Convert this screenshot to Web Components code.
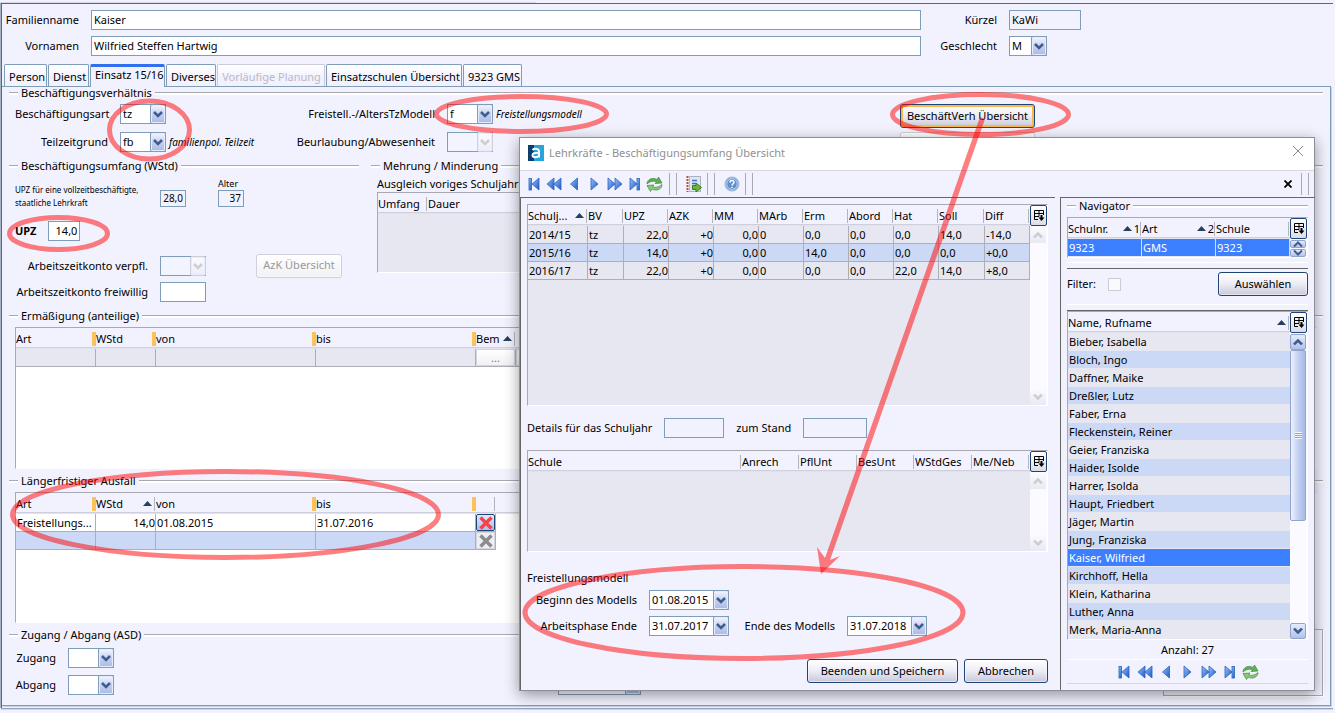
<!DOCTYPE html>
<html lang="de">
<head>
<meta charset="utf-8">
<title>Lehrkräfte</title>
<style>
html{background:#f2f2ff}
body{margin:0;font:11px/14px "Noto Sans","Open Sans",sans-serif;color:#000}
</style>
</head>
<body>
<teacher-app></teacher-app>
<script>
const BASE = `
*{box-sizing:border-box}
:host{display:block}
:host([hidden]){display:none}
input,select,button{font:inherit;color:inherit;margin:0;outline:0}
label{white-space:nowrap}
`;
let uid = 0;
function define(name, render, after) {
  customElements.define(name, class extends HTMLElement {
    connectedCallback() {
      if (this.shadowRoot) return;
      this.attachShadow({ mode: 'open' }).innerHTML = render(this);
      if (after) after(this);
    }
  });
}
const attr = (el, n, d = '') => el.hasAttribute(n) ? el.getAttribute(n) : d;

/* label + text box */
define('text-field', el => {
  const id = 'f' + (++uid), label = attr(el, 'label');
  return `<style>${BASE}
  :host{display:flex;align-items:center;gap:12px}
  label{flex:none;width:var(--label,auto);text-align:right}
  input{flex:1;min-width:0;width:var(--field,100%);height:var(--h,20px);border:1px solid #7f9db9;background:#fff;padding:0 2px 2px;text-align:var(--align,left)}
  :host([fixed]) input{flex:none}
  input[readonly]{background:#f2f2ff}
  </style>${label ? `<label for="${id}">${label}</label>` : ''}<input id="${id}" type="text" value="${attr(el, 'value')}" ${label ? '' : `aria-label="${attr(el, 'name')}"`} ${el.hasAttribute('readonly') ? 'readonly' : ''}>`;
});

/* label + drop-down */
define('combo-box', el => {
  const id = 'c' + (++uid), label = attr(el, 'label'), v = attr(el, 'value');
  return `<style>${BASE}
  :host{display:flex;align-items:center;gap:12px}
  label{flex:none;width:var(--label,auto);text-align:right}
  .box{display:grid;grid-template-columns:1fr 16px;width:var(--field,46px);height:20px;flex:none}
  select{grid-area:1/1/2/3;appearance:none;background:linear-gradient(#fff,#fff) no-repeat 0 0/calc(100% - 15px) 100%;border:0;border-radius:0;box-shadow:inset 1px 1px #7f9db9,inset 0 -1px #7f9db9;height:20px;padding:0 18px 1px 3px;width:100%;min-width:0}
  .arrow{grid-area:1/2;pointer-events:none;height:20px;border:1px solid #7f9db9;border-radius:2px;background:linear-gradient(#f4f6ff,#c6d1f2 50%,#a9bae2);box-shadow:inset 0 0 0 1px #e6ecff;display:grid;place-items:center}
  path{fill:none;stroke:#3f5c8c;stroke-width:2.5}
  :host([disabled]) select{background:#f2f5ff;opacity:1}
  :host([disabled]) .arrow{border-color:#d0d0dc;background:linear-gradient(#fbfbff,#ededf4)}
  :host([disabled]) path{stroke:#cdcdd8}
  .hint{font-size:10px;font-style:italic;margin-left:-9px}
  </style>${label ? `<label for="${id}">${label}</label>` : ''}<span class="box"><select id="${id}" ${label ? '' : `aria-label="${attr(el, 'name')}"`} ${el.hasAttribute('disabled') ? 'disabled' : ''}><option>${v}</option></select><span class="arrow"><svg width="10" height="8" viewBox="0 0 10 8"><path d="M1 2 5 6 9 2"/></svg></span></span>${attr(el, 'hint') ? `<span class="hint">${attr(el, 'hint')}</span>` : ''}`;
});

define('push-button', el => `<style>${BASE}
  button{display:block;width:var(--w,auto);height:24px;padding:0 0 1px;border:1px solid #1f4478;border-radius:3px;background:linear-gradient(#fff,#ececf6 50%,#c8c8da);box-shadow:inset 0 0 0 1px #ffffff80;white-space:nowrap}
  :host([primary]) button{box-shadow:inset 0 0 0 2px #f9b84a}
  :host([disabled]) button{color:#999;border-color:#cfcfda;background:linear-gradient(#fff,#f1f1f6)}
  </style><button type="button" ${el.hasAttribute('disabled') ? 'disabled' : ''} ${attr(el, 'name') ? `aria-label="${attr(el, 'name')}"` : ''}><slot></slot></button>`);

define('group-box', el => `<style>${BASE}
  .cap{display:flex;align-items:center;gap:3px;height:12px;white-space:nowrap}
  .cap::before,.cap::after{content:"";height:2px;border-top:1px solid #a9a9b3;background:#fff}
  .cap::before{width:9px}.cap::after{flex:1}
  .in{padding:var(--pad,5px 0 0 6px)}
  </style><div class="cap">${attr(el, 'caption')}</div><div class="in"><slot></slot></div>`);

/* vertical scroll bar with end arrows */
define('scroll-bar', () => `<style>${BASE}
  :host{display:flex;flex-direction:column;justify-content:space-between;width:17px;background:#fbfbff;padding:1px 1px 0 0}
  .b{height:16px;display:grid;place-items:center;background:linear-gradient(#fafaff,#e9e9f1)}
  path{fill:none;stroke:#cdcdd8;stroke-width:2.5}
  .t{display:none;flex:1;margin-bottom:102px;border:1px solid #90a5cc;border-radius:2px;background:linear-gradient(90deg,#eef2ff,#bccbf0 60%,#a9bae4);place-items:center}
  .t::before{content:"";width:7px;height:7px;background:repeating-linear-gradient(#f5f8ff 0 1px,#90a5cc 1px 2px)}
  :host([active]) .b,:host([mini]) .b{background:linear-gradient(#e6ecff,#b2c1e8);border:1px solid #90a5cc;border-radius:2px}
  :host([active]) path,:host([mini]) path{stroke:#3f5c8c}
  :host([active]) .t{display:grid}
  :host([mini]) .b{height:8px}
  :host([mini]) path{stroke-width:2}
  </style><div class="b"><svg width="10" height="6" viewBox="0 0 10 6"><path d="M1 5.500 5 1.500 9 5.500"/></svg></div><div class="t"></div><div class="b"><svg width="10" height="6" viewBox="0 0 10 6"><path d="M1 .5 5 4.500 9 .5"/></svg></div>`);

/* data table: cols = [title, width, flags, sort rank]; flags o = orange mark, r = right aligned, s = sorted */
const cell = (v) => {
  if (v === '@more') return `<button type="button" class="more" disabled>...</button>`;
  if (v === '@del' || v === '@del0') return `<button type="button" class="del ${v === '@del' ? 'on' : ''}" aria-label="Zeile löschen"><svg width="16" height="14" viewBox="0 0 16 14"><path d="M2.500 1.500 13.500 12.500M13.500 1.500 2.500 12.500"/></svg></button>`;
  return v;
};
define('data-grid', el => {
  const cols = JSON.parse(attr(el, 'cols')), rows = JSON.parse(attr(el, 'rows', '[]'));
  const sel = +attr(el, 'selected', '-1');
  const up = '<svg width="9" height="5" viewBox="0 0 9 5"><path d="M0 5 4.500 0 9 5z" fill="#26415f"/></svg>';
  return `<style>${BASE}
  :host{display:flex;border:1px solid;border-color:#a9a9b3 #fff #fff #a9a9b3;min-height:var(--min,0)}
  .view{flex:1;min-width:0;background:linear-gradient(#f2f2ff 0 19px,#cfcfdd 19px 20px,#e2e2ec 20px 21px,var(--body,#fff) 21px);overflow:hidden}
  table{table-layout:fixed;border-spacing:0;width:${cols.reduce((a, c) => a + c[1], 0)}px}
  th{height:21px;padding:0 2px 0 0;font-weight:400;text-align:left;background:linear-gradient(#b4b4be,#b4b4be) no-repeat right 1px top 4px/1px 14px}
  th.o{background:linear-gradient(90deg,#fcc35c 3px,#c4c4ce 3px) no-repeat right 0 top 4px/4px 14px}
  .h{display:flex;align-items:center;height:19px;padding:0;overflow:hidden;white-space:nowrap}
  .h svg{margin:0 2px 0 auto}
  td{height:18px;padding:1px 0 0 1px;border:solid #aeaeb8;border-width:0 1px 1px 0;background:var(--row,#e7e7f1);white-space:nowrap;overflow:hidden;line-height:16px}
  td.r{text-align:right}
  tr.alt td{background:#ccd9f6}
  tr.sel td{background:#3d80ff;color:#fff}
  :host([soft]) td{border-right-color:#d5dcf0;border-bottom-color:#e7e7f1}
  :host([list]) td{border-right:0;border-bottom-color:#e7e7f1}
  .side{display:flex;flex-direction:column;width:17px;background:#fff}
  .side scroll-bar{flex:1}
  .corner{width:17px;height:21px;padding:0;border:1px solid #1f4478;border-radius:2px;background:linear-gradient(#fff,#dcdce8);display:grid;place-items:center}
  td:has(button){padding:0}
  .more{display:block;width:100%;height:17px;padding:0;line-height:12px;border:1px solid #d5d5df;border-radius:2px;background:linear-gradient(#fff,#f1f1f6);color:#777}
  .del{display:grid;place-items:center;width:100%;height:17px;padding:0;border:1px solid #d5d5df;border-radius:2px;background:#eeeef3}
  .del path{stroke:#8b8b90;stroke-width:3.500;fill:none}
  .del.on{border-color:#1f4478;background:linear-gradient(#e2eaff,#aabfe9)}
  .del.on path{stroke:#f4434a}
  </style>
  <div class="view"><table><colgroup>${cols.map(c => `<col style="width:${c[1]}px">`).join('')}</colgroup>
  <thead><tr>${cols.map(c => `<th class="${/o/.test(c[2] || '') ? 'o' : ''}"><span class="h">${c[0]}${/s/.test(c[2] || '') ? up : ''}${c[3] || ''}</span></th>`).join('')}</tr></thead>
  <tbody>${rows.map((r, i) => `<tr class="${i === sel ? 'sel' : i % 2 ? 'alt' : ''}">${r.map((v, j) => `<td class="${/r/.test(cols[j][2] || '') ? 'r' : ''}">${cell(v)}</td>`).join('')}</tr>`).join('')}</tbody></table></div>
  ${el.hasAttribute('scroll') ? `<div class="side"><button class="corner" type="button" aria-label="Spalten wählen"><svg width="12" height="13" viewBox="0 0 12 13"><path d="M5 10.500H1.500V1.500H10.500V6M1.500 4.500H10.500M6 1.500V7.500M1.500 7.500H6" fill="none" stroke="#000"/><path d="M8.500 6V9" stroke="#000" stroke-width="2"/><path d="M5.500 8.500H11.500L8.500 12z"/></svg></button><scroll-bar ${attr(el, 'scroll')}></scroll-bar></div>` : ''}`;
});

/* record navigation: first, page back, back, next, page next, last, reload */
define('record-nav', () => {
  const tri = (x, d) => `<path d="M${x} 2 ${x + 7 * d} 8 ${x} 14z" fill="url(#g)" stroke="#2a63c0" stroke-width=".8"/>`;
  const bar = x => `<rect x="${x}" y="2.500" width="2.500" height="11.500" fill="url(#g)" stroke="#2a63c0" stroke-width=".8"/>`;
  const defs = '<defs><linearGradient id="g" x2="1" y2="1"><stop stop-color="#9cc4f8"/><stop offset="1" stop-color="#1857c6"/></linearGradient></defs>';
  const reload = '<path d="M1 8C1 3 7 1 11 3.500L12.500 1 16 7 9 7.500 10.500 6C8 4.500 4.500 5 1 8z" fill="#62b055" stroke="#3b8a3c" stroke-width=".7"/><path d="M16 8.500C16 13.500 10 15.500 6 13L4.500 15.500 1 9.500 8 9 6.500 10.500C9 12 12.500 11.500 16 8.500z" fill="#8ac97a" stroke="#3b8a3c" stroke-width=".7"/>';
  const items = [['Erster', bar(3) + tri(13, -1)], ['Seite zurück', tri(8, -1) + tri(15, -1)], ['Zurück', tri(11.5, -1)], ['Weiter', tri(5, 1)], ['Seite vor', tri(2, 1) + tri(9, 1)], ['Letzter', tri(4, 1) + bar(11)], ['Aktualisieren', reload]];
  return `<style>${BASE}
  :host{display:flex}
  button{width:var(--step,20px);height:20px;padding:0;border:0;background:none;display:grid;place-items:center}
  </style>${items.map(i => `<button type="button" aria-label="${i[0]}"><svg width="17" height="16" viewBox="0 0 17 16">${defs}${i[1]}</svg></button>`).join('')}`;
});

define('tab-bar', () => `<style>${BASE}
  :host{display:flex;align-items:flex-end;gap:1px;padding-left:2px;height:22px}
  button{height:22px;padding:3px 3px 0 4px;border:1px solid #7f9db9;border-bottom:0;border-radius:2px 2px 0 0;background:linear-gradient(#fff,#f2f2ff 60%);white-space:nowrap;width:var(--w);line-height:14px}
  button.on{height:23px;border-top:3px solid #2f6ff0;padding-top:0;padding-bottom:4px;background:#f2f2ff;margin-bottom:-1px}
  button:disabled{color:#b9b9c4;border-color:#c9ccd8}
  </style>${[['Person', 43], ['Dienst', 41], ['Einsatz 15/16', 75, 'on'], ['Diverses', 50], ['Vorläufige Planung', 108, 'off'], ['Einsatzschulen Übersicht', 136], ['9323 GMS', 59]].map(t => `<button type="button" class="${t[2] || ''}" style="--w:${t[1]}px" ${t[2] === 'off' ? 'disabled' : ''}>${t[0]}</button>`).join('')}`);

define('overview-dialog', () => `<style>${BASE}
  :host{width:796px;border:1px solid #8e8e96;background:#f2f2ff;box-shadow:0 4px 14px #0006;padding-right:1px}
  header{display:flex;align-items:center;gap:5px;height:33px;margin-right:-1px;padding:0 8px 3px;background:#fff;border-bottom:1px solid #d5d5e6;font-size:11px;color:#8f8f8f}
  header button{margin-left:auto;width:16px;height:16px;padding:0;border:0;background:none}
  .bar{display:flex;align-items:center;height:26px;padding-left:4px}
  .bar record-nav{margin-right:3px}
  .sep{width:8px;height:22px;border:solid #a9a9b3;border-width:0 1px;margin-left:2px}
  .bar .ic{width:22px;height:24px;margin-left:6px;padding:0;border:0;background:none;display:grid;place-items:center}
  .bar .x{margin-left:auto}.bar .last{margin-right:4px}
  .cols{display:grid;grid-template-columns:535px 1fr;gap:5px}
  .left,.right{border:solid #666;border-width:1px 0 0 1px;padding:6px 7px 0 6px}
  .right{padding:2px 7px 6px 6px}
  .row{display:flex;gap:12px;margin:12px 0}
  .form{display:grid;grid-template-columns:201px auto;gap:6px 0;margin-top:5px}
  .foot{display:flex;justify-content:flex-end;gap:6px;margin-top:23px}
  .rule{height:7px;border:solid;border-width:1px 0;border-color:#fff #666 #666}
  .filter{display:flex;align-items:center;height:35px;padding-bottom:5px}
  .filter input{appearance:none;width:13px;height:13px;border:1px solid #cdcdd8;background:#fafafc;margin:0 auto 0 12px}
  .count{text-align:center;height:20px;line-height:19px;border-bottom:1px solid #fff}
  .nav{display:flex;justify-content:center;padding:2px 0 1px;border-bottom:1px solid #d5d5e6}
  </style>
  <header><svg width="16" height="16" viewBox="0 0 16 16"><rect width="16" height="16" fill="#29a3dc"/><path d="M0 0H6V16H0z" fill="#0d3c6e"/><path d="M4.500 5C6 3.500 11 3 11 6.500V12.500M11 8C6 7.500 4.500 8.500 4.500 10.300 4.500 13 9.500 13 11 10.500" fill="none" stroke="#fff" stroke-width="2"/></svg>
  <span>Lehrkräfte - Beschäftigungsumfang Übersicht</span>
  <button type="button" aria-label="Schließen"><svg width="12" height="12" viewBox="0 0 12 12"><path d="M1 1 11 11M11 1 1 11" stroke="#888"/></svg></button></header>
  <div class="bar"><record-nav></record-nav><i class="sep"></i>
    <button class="ic" type="button" aria-label="Exportieren"><svg width="16" height="16" viewBox="0 0 16 16"><rect x="3.500" y=".5" width="11" height="15" fill="#dfe6f2" stroke="#a9b3c6"/><path d="M1.500 0V16" stroke="#b0532a" stroke-width="2" stroke-dasharray="2 1"/><path d="M3.500 0V16" stroke="#e9b48c"/><path d="M6 4.500H11M6 7.500H10" stroke="#3f74c8" stroke-width="1.500"/><path d="M6.500 9.500H10V7L15.500 11.500 10 16V13.500H6.500z" fill="#6cb33f" stroke="#3b7d22"/></svg></button><i class="sep"></i>
    <button class="ic" type="button" aria-label="Hilfe"><svg width="16" height="16" viewBox="0 0 16 16"><circle cx="8" cy="8" r="6.800" fill="#5f8fd0" stroke="#9fb9df" stroke-width="1.500"/><circle cx="8" cy="8" r="5.300" fill="none" stroke="#e4eefb" stroke-width=".7"/><path d="M6 6.500C6 4 10 4 10 6.300 10 7.700 8 7.800 8 9.500M8 10.700V12" fill="none" stroke="#fff" stroke-width="1.500"/></svg></button><i class="sep"></i>
    <button class="ic x" type="button" aria-label="Fenster schließen"><svg width="8" height="8" viewBox="0 0 8 8"><path d="M.5.500 7.500 7.500M7.500.500.500 7.500" stroke="#000" stroke-width="1.800"/></svg></button><i class="sep last"></i></div>
  <div class="cols"><section class="left">
    <data-grid scroll style="--min:202px;--body:#e7e7f1" cols='[["Schulj...",60,"s"],["BV",36],["UPZ",45,"r"],["AZK",45,"r"],["MM",45,"r"],["MArb",45],["Erm",45],["Abord",45],["Hat",45],["Soll",46],["Diff",45]]' rows='[["2014/15","tz","22,0","+0","0,0","0","0,0","0,0","0,0","14,0","-14,0"],["2015/16","tz","14,0","+0","0,0","0","14,0","0,0","0,0","0,0","+0,0"],["2016/17","tz","22,0","+0","0,0","0","0,0","0,0","22,0","14,0","+8,0"]]'></data-grid>
    <div class="row"><text-field fixed readonly style="--field:60px" label="Details für das Schuljahr"></text-field><text-field fixed readonly style="--field:64px" label="zum Stand"></text-field></div>
    <data-grid scroll style="--min:102px;--body:#e7e7f1" cols='[["Schule",214],["Anrech",58],["PflUnt",58],["BesUnt",57],["WStdGes",58],["Me/Neb",57]]'></data-grid>
    <div style="margin-top:19px">Freistellungsmodell</div>
    <div class="form"><combo-box style="--label:110px;--field:80px" label="Beginn des Modells" value="01.08.2015"></combo-box><span></span>
      <combo-box style="--label:110px;--field:80px" label="Arbeitsphase Ende" value="31.07.2017"></combo-box><combo-box style="--label:107px;--field:80px" label="Ende des Modells" value="31.07.2018"></combo-box></div>
    <div class="foot"><push-button style="--w:151px">Beenden und Speichern</push-button><push-button style="--w:84px">Abbrechen</push-button></div>
  </section><section class="right">
    <group-box caption="Navigator" style="--pad:5px 0 0">
    <data-grid soft scroll="mini" selected="0" cols='[["Schulnr.",74,"s","1"],["Art",74,"s","2"],["Schule",74]]' rows='[["9323","GMS","9323"]]'></data-grid></group-box>
    <div class="rule" style="margin-top:4px"></div>
    <div class="filter"><label for="flt">Filter:</label><input id="flt" type="checkbox"><push-button style="--w:90px">Auswählen</push-button></div>
    <div class="rule"></div>
    <data-grid list scroll="active" selected="12" style="--min:328px" cols='[["Name, Rufname",222,"s"]]' rows='[["Bieber, Isabella"],["Bloch, Ingo"],["Daffner, Maike"],["Dreßler, Lutz"],["Faber, Erna"],["Fleckenstein, Reiner"],["Geier, Franziska"],["Haider, Isolde"],["Harrer, Isolda"],["Haupt, Friedbert"],["Jäger, Martin"],["Jung, Franziska"],["Kaiser, Wilfried"],["Kirchhoff, Hella"],["Klein, Katharina"],["Luther, Anna"],["Merk, Maria-Anna"]]'></data-grid>
    <div class="count">Anzahl: 27</div><div class="nav"><record-nav style="--step:21px"></record-nav></div>
  </section></div>`);

/* red marker drawn over the form */
define('red-marks', () => `<style>${BASE}
  :host{pointer-events:none}
  svg{display:block;overflow:visible}
  ellipse{fill:none;stroke:#ff0000;stroke-opacity:.5;stroke-width:5}
  path{fill:#ff0000;fill-opacity:.5}
  </style><svg width="1" height="1">
  <ellipse cx="149.500" cy="130" rx="40" ry="29"/><ellipse cx="521.500" cy="114" rx="85" ry="17.500"/><ellipse cx="980.500" cy="114.500" rx="88" ry="20"/>
  <ellipse cx="58.500" cy="233.500" rx="49" ry="16"/><ellipse cx="225.500" cy="514.500" rx="213" ry="43"/><ellipse cx="744" cy="612.500" rx="219" ry="46"/>
  <path d="M980 117 985 119 830 560 840 556 821 574 817 547 825 558z"/></svg>`);

define('teacher-app', () => `<style>${BASE}
  :host{position:relative;padding:3px 2px 2px 1px;overflow:hidden;background:linear-gradient(#d5d5e6,#d5d5e6) no-repeat 0 2px/536px 1px}
  .frame{border:solid #666;border-width:1px 0 0 1px;box-shadow:0 1px #8ea3bd,0 2px #d5d5e6,-1px 0 #a7b3c6;padding:0 2px 2px 0}
  .head{display:grid;grid-template-columns:minmax(300px,919px) auto;gap:6px 0;padding:6px 250px 8px 0;justify-content:space-between}
  .panel{border:1px solid #7f9db9;border-left:0;box-shadow:1px 1px #c8cfe0;padding:0 7px 9px}
  .r1{display:grid;grid-template-columns:260px minmax(300px,625px) auto;grid-auto-rows:20px;gap:8px 0}
  .two{display:grid;grid-template-columns:350px 1fr;gap:12px;margin-top:8px}
  .upz{display:flex;height:29px;margin-top:1px;font-size:10px}
  .tiny{font-size:8px;line-height:13px;width:145px;padding-top:5px}
  .alter{display:grid;align-content:end}
  .bottom{display:grid;grid-template-columns:1fr 160px;margin-top:6px}
  .blank{border:1px solid #a9a9b3;height:67px;box-shadow:1px 1px #fff}
  group-box{margin-top:6px}
  .over{position:absolute;left:519px;top:137px}
  red-marks{position:absolute;left:0;top:0}
  </style>
  <div class="frame">
  <div class="head">
    <text-field style="--label:77px" label="Familienname" value="Kaiser"></text-field><text-field fixed readonly style="--label:76px;--field:72px" label="Kürzel" value="KaWi"></text-field>
    <text-field style="--label:77px" label="Vornamen" value="Wilfried Steffen Hartwig"></text-field><combo-box style="--label:76px;--field:38px" label="Geschlecht" value="M"></combo-box>
  </div>
  <tab-bar></tab-bar>
  <div class="panel">
    <group-box caption="Beschäftigungsverhältnis" style="margin-top:0"><div class="r1">
      <combo-box style="--label:93px" label="Beschäftigungsart" value="tz"></combo-box><combo-box style="--label:160px" label="Freistell.-/AltersTzModell" value="f" hint="Freistellungsmodell"></combo-box><push-button primary style="--w:135px">BeschäftVerh Übersicht</push-button>
      <combo-box style="--label:93px" label="Teilzeitgrund" value="fb" hint="familienpol. Teilzeit"></combo-box><combo-box disabled style="--label:160px" label="Beurlaubung/Abwesenheit"></combo-box><push-button disabled name="Abwesenheit" style="--w:135px"></push-button>
    </div></group-box>
    <div class="two">
      <group-box caption="Beschäftigungsumfang (WStd)" style="margin:0">
        <div class="upz"><div class="tiny">UPZ für eine vollzeitbeschäftigte,<br>staatliche Lehrkraft</div><text-field fixed readonly name="UPZ voll" value="28,0" style="--field:26px;--h:17px;--align:right;align-items:end;width:58px"></text-field>
          <div class="alter"><label for="age" style="font-size:9px;line-height:12px">Alter</label><input id="age" readonly value="37" style="width:26px;height:17px;border:1px solid #7f9db9;background:#f2f2ff;text-align:right;padding:0 2px 2px"></div></div>
        <text-field fixed label="&lt;b&gt;UPZ&lt;/b&gt;" value="14,0" style="--field:32px;--align:right;margin-top:14px"></text-field>
        <div style="display:flex;gap:50px;margin-top:13px;height:23px;align-items:center"><combo-box disabled style="--label:133px" label="Arbeitszeitkonto verpfl."></combo-box><push-button disabled style="--w:86px">AzK Übersicht</push-button></div>
        <text-field fixed style="--label:133px;--field:46px;margin-top:5px" label="Arbeitszeitkonto freiwillig"></text-field>
      </group-box>
      <group-box caption="Mehrung / Minderung" style="margin:0">
        <div>Ausgleich voriges Schuljahr</div>
        <data-grid style="--min:81px;--body:#e7e7f1;margin:1px 8px 0 0" cols='[["Umfang",50],["Dauer",300]]'></data-grid>
      </group-box>
    </div>
    <group-box caption="Ermäßigung (anteilige)" style="margin-top:8px">
      <data-grid style="--min:142px;margin-right:7px" cols='[["Art",80,"o"],["WStd",60,"o"],["von",160,"o"],["bis",160,"o"],["Bem",40,"s"],["",40]]' rows='[["","","","","@more","@more"]]'></data-grid></group-box>
    <group-box caption="Längerfristiger Ausfall">
      <data-grid style="--min:131px;--row:#fff;margin-right:7px" cols='[["Art",80,"o"],["WStd",60,"rs"],["von",160,"o"],["bis",160,"o"],["",20]]' rows='[["Freistellungs...","14,0","01.08.2015","31.07.2016","@del"],["","","","","@del0"]]'></data-grid></group-box>
    <div class="bottom"><group-box caption="Zugang / Abgang (ASD)" style="--pad:7px 0 0 6px;margin:0"><div style="display:grid;grid-template-columns:543px auto;gap:7px 0">
      <combo-box style="--label:41px" label="Zugang"></combo-box><span></span><combo-box style="--label:41px" label="Abgang"></combo-box><combo-box name="Ziel" style="--field:83px"></combo-box></div></group-box><div class="blank"></div></div>
  </div></div>
  <overview-dialog class="over" role="dialog"></overview-dialog>
  <red-marks></red-marks>`);
</script>
</body>
</html>
